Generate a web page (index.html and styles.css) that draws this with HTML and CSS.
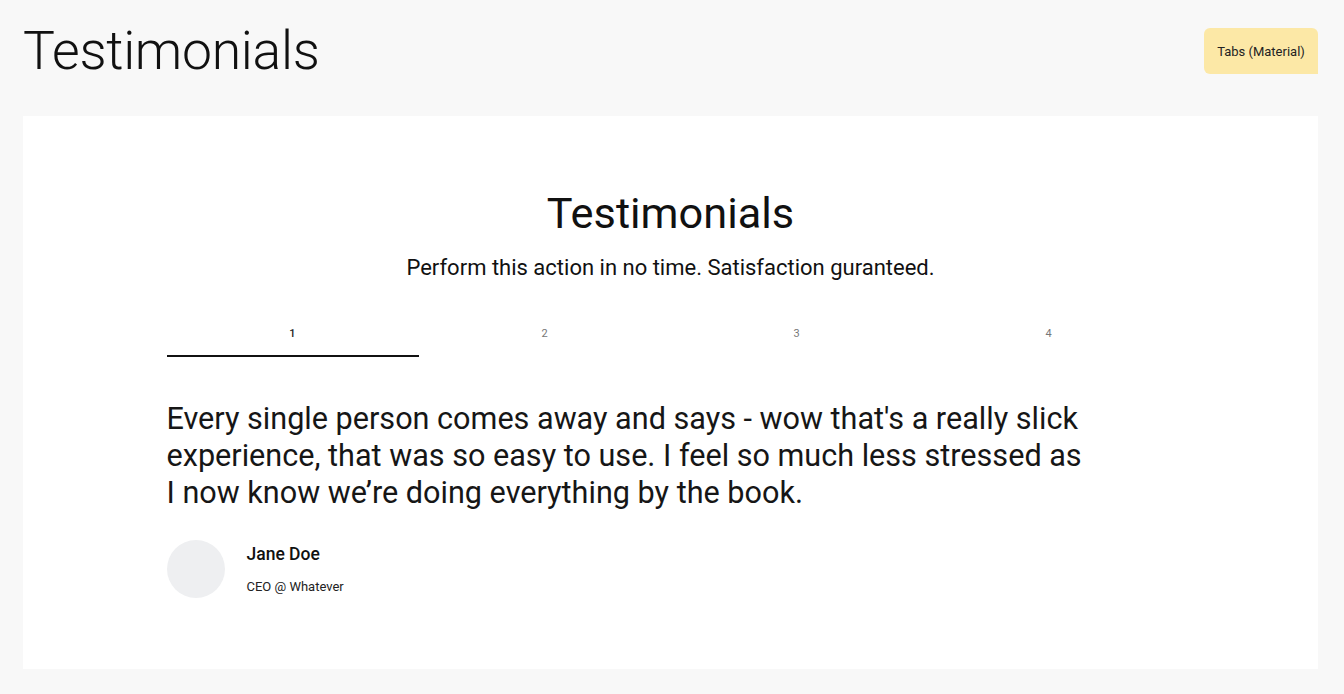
FILE: index.html
```html
<!DOCTYPE html>
<html lang="en">
<head>
    <meta charset="UTF-8">
    <meta name="viewport" content="width=device-width, initial-scale=1.0">
    <title>Testimonials</title>
    <link rel="stylesheet" href="styles.css">
</head>
<body>
    <header class="page-header">
        <h1 class="page-title">Testimonials</h1>
        <span class="tag">Tabs (Material)</span>
    </header>

    <main class="card">
        <section class="testimonials">
            <h2 class="section-title">Testimonials</h2>
            <p class="section-sub">Perform this action in no time. Satisfaction guranteed.</p>

            <div class="tabs">
                <div class="tab active">1</div>
                <div class="tab">2</div>
                <div class="tab">3</div>
                <div class="tab">4</div>
            </div>

            <blockquote class="quote">
                Every single person comes away and says - wow that's a really slick experience, that was so easy to use. I feel so much less stressed as I now know we’re doing everything by the book.
            </blockquote>

            <div class="author">
                <div class="avatar"></div>
                <div class="author-info">
                    <div class="author-name">Jane Doe</div>
                    <div class="author-role">CEO @ Whatever</div>
                </div>
            </div>
        </section>
    </main>
</body>
</html>
```

FILE: styles.css
```css
/* General Styles */
body {
    font-family: Roboto, 'Noto Sans', sans-serif;
    margin: 0;
    padding: 0 26px 25px 23px;
    background-color: #f8f8f8;
    color: #111;
}

.page-header {
    display: flex;
    justify-content: space-between;
    align-items: flex-start;
    height: 116px;
}

.page-title {
    margin: 20px 0 0 0;
    font-size: 53.5px;
    font-weight: 300;
    line-height: 62px;
    letter-spacing: -0.3px;
}

.tag {
    margin-top: 28px;
    background-color: #fce8a6;
    color: #222;
    font-size: 13px;
    width: 114px;
    height: 46px;
    display: flex;
    align-items: center;
    justify-content: center;
    border-radius: 6px 6px 0 6px;
}

/* Card */
.card {
    background-color: #ffffff;
    height: 553px;
    display: flex;
    justify-content: center;
}

.testimonials {
    width: 1008px;
    padding-top: 73px;
}

.section-title {
    margin: 0;
    text-align: center;
    font-size: 43.3px;
    font-weight: 400;
    line-height: 50px;
}

.section-sub {
    margin: 16px 0 0 0;
    text-align: center;
    font-size: 22px;
    line-height: 26px;
}

/* Tabs */
.tabs {
    display: grid;
    grid-template-columns: repeat(4, 1fr);
    margin-top: 38px;
}

.tab {
    text-align: center;
    font-size: 11px;
    color: #777;
    padding: 8px 0 15px;
    border-bottom: 2px solid transparent;
}

.tab.active {
    color: #222;
    font-weight: 500;
    border-bottom-color: #111;
}

/* Quote */
.quote {
    margin: 43px 0 0 0;
    max-width: 922px;
    font-size: 30.6px;
    line-height: 37px;
    color: #161616;
}

.author {
    display: flex;
    align-items: center;
    gap: 22px;
    margin-top: 29px;
}

.avatar {
    width: 58px;
    height: 58px;
    border-radius: 50%;
    background-color: #eeeff1;
}

.author-name {
    font-size: 17.5px;
    font-weight: 500;
    margin-bottom: 15px;
}

.author-role {
    font-size: 13px;
    color: #222;
}
```
